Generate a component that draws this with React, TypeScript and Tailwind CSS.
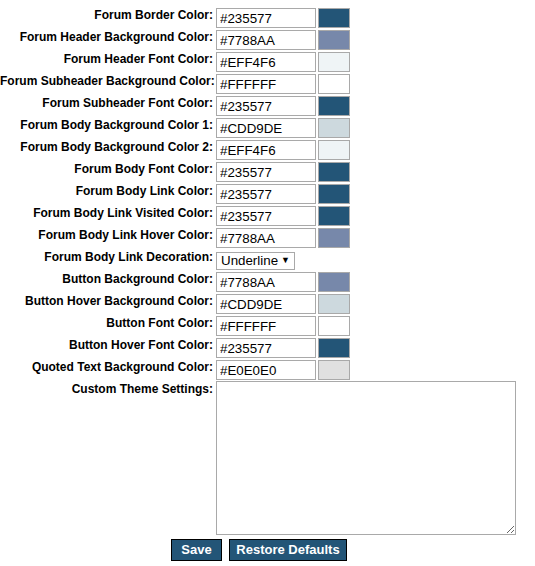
import React from 'react';

type Row = { label: string; value: string };

const rows: Row[] = [
  { label: 'Forum Border Color:', value: '#235577' },
  { label: 'Forum Header Background Color:', value: '#7788AA' },
  { label: 'Forum Header Font Color:', value: '#EFF4F6' },
  { label: 'Forum Subheader Background Color:', value: '#FFFFFF' },
  { label: 'Forum Subheader Font Color:', value: '#235577' },
  { label: 'Forum Body Background Color 1:', value: '#CDD9DE' },
  { label: 'Forum Body Background Color 2:', value: '#EFF4F6' },
  { label: 'Forum Body Font Color:', value: '#235577' },
  { label: 'Forum Body Link Color:', value: '#235577' },
  { label: 'Forum Body Link Visited Color:', value: '#235577' },
  { label: 'Forum Body Link Hover Color:', value: '#7788AA' },
];

const rows2: Row[] = [
  { label: 'Button Background Color:', value: '#7788AA' },
  { label: 'Button Hover Background Color:', value: '#CDD9DE' },
  { label: 'Button Font Color:', value: '#FFFFFF' },
  { label: 'Button Hover Font Color:', value: '#235577' },
  { label: 'Quoted Text Background Color:', value: '#E0E0E0' },
];

const Label: React.FC<{ children: React.ReactNode }> = ({ children }) => (
  <div className="w-[213px] shrink-0 text-right text-[12px] font-bold leading-[14px] text-black whitespace-nowrap">
    {children}
  </div>
);

const ColorRow: React.FC<Row> = ({ label, value }) => (
  <div className="flex items-start h-[20px] mb-[2px]">
    <Label>{label}</Label>
    <input
      readOnly
      value={value}
      className="ml-[3px] w-[100px] h-[20px] border border-[#a9a9a9] px-[3px] text-[13.33px] text-black outline-none"
    />
    <div className="ml-[2px] w-[32px] h-[20px] border border-[#a9a9a9]" style={{ backgroundColor: value }} />
  </div>
);

export default function App() {
  return (
    <div className="w-[535px] h-[566px] bg-white pt-[8px] font-['Liberation_Sans',Arial,sans-serif]">
      {rows.map((r) => (
        <ColorRow key={r.label} {...r} />
      ))}
      <div className="flex items-start h-[20px] mb-[2px]">
        <Label>Forum Body Link Decoration:</Label>
        <div className="ml-[3px] mt-[2px] w-[79px] h-[18px] border border-[#a9a9a9] flex items-center pl-[4px] text-[13.33px] text-black">
          <span>Underline</span>
          <span className="ml-auto mr-[4px] text-[9px]">▼</span>
        </div>
      </div>
      {rows2.map((r) => (
        <ColorRow key={r.label} {...r} />
      ))}
      <div className="flex items-start">
        <Label>Custom Theme Settings:</Label>
        <textarea className="ml-[3px] -mt-[1px] w-[300px] h-[154px] border border-[#a9a9a9] outline-none" />
      </div>
      <div className="w-[518px] flex justify-center gap-[7px] mt-[4px]">
        <button className="w-[51px] h-[22px] bg-[#235577] border border-black text-white text-[13px] font-bold">
          Save
        </button>
        <button className="w-[118px] h-[22px] bg-[#235577] border border-black text-white text-[13px] font-bold">
          Restore Defaults
        </button>
      </div>
    </div>
  );
}
